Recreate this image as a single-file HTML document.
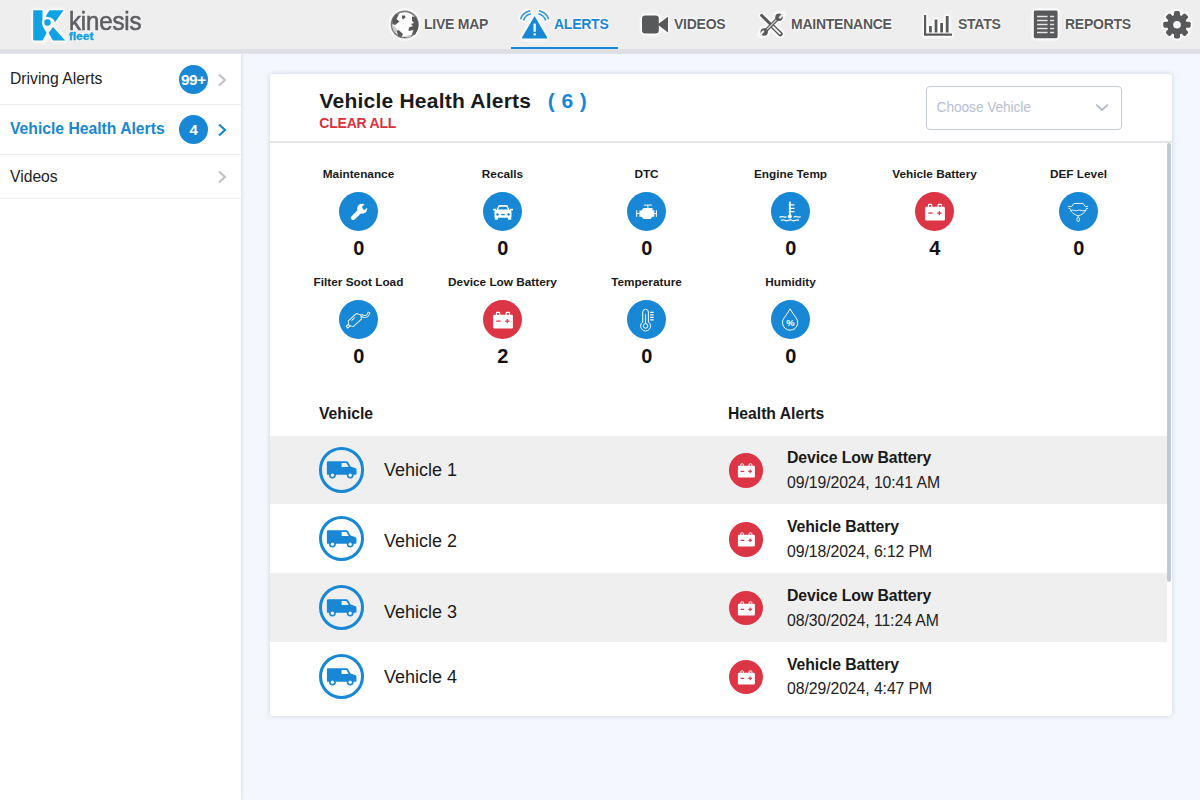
<!DOCTYPE html>
<html lang="en">
<head>
<meta charset="utf-8">
<title>Kinesis Fleet - Vehicle Health Alerts</title>
<style>
*{box-sizing:border-box;margin:0;padding:0}
html,body{width:1200px;height:800px;overflow:hidden}
body{font-family:"Liberation Sans",Arial,sans-serif;background:#f4f7fe;color:#1a1a1a;position:relative}
.abs{position:absolute}
/* header */
#hdr{position:absolute;left:0;top:0;width:1200px;height:49px;background:#eeeeee;z-index:5}
#strip{position:absolute;left:0;top:49px;width:1200px;height:5px;z-index:5;background:linear-gradient(#e4e5e8 0,#dcdde2 40%,#dddfe5 80%,#e6e8ee 100%)}
.nav{position:absolute;top:0;height:51px;font-weight:bold;font-size:14px;letter-spacing:-.25px;color:#58585a;line-height:16px;white-space:nowrap}
.nav span{position:absolute;top:16px}
.nav.act{color:#1787d6}
.nav span{text-shadow:0 0 1px #fff,0 0 1px #fff,0 0 2px #fff,0 0 2px #fff,0 0 2px #fff,0 0 3px #fff}
.hl{filter:drop-shadow(0 0 .7px #fff) drop-shadow(0 0 .8px #fff) drop-shadow(0 0 1px #fff) drop-shadow(0 0 1px #fff)}
#ul{position:absolute;left:511px;top:46.6px;width:106.5px;height:3.2px;background:#1787d6}
/* sidebar */
#side{position:absolute;left:0;top:54px;width:241px;height:746px;background:#fff;box-shadow:1px 0 3px rgba(150,160,190,.3);z-index:2}
.si{position:absolute;left:0;width:241px;border-bottom:1px solid #eeeef2;font-size:15.7px;color:#222}
.si .t{position:absolute;left:10px;white-space:nowrap;line-height:19px}
.bdg{position:absolute;left:178.8px;width:29.2px;height:29.2px;border-radius:50%;background:#1787d6;color:#fff;font-weight:bold;font-size:14px;text-align:center;line-height:29px;letter-spacing:-.6px}
/* card */
#card{position:absolute;left:270px;top:74px;width:902px;height:642px;background:#fff;border-radius:3px;box-shadow:0 0 5px rgba(105,110,130,.27)}
#chead{position:absolute;left:0;top:0;width:902px;height:69px;border-bottom:2px solid #e3e5ea}
#title{position:absolute;left:49.4px;top:14.8px;font-size:21px;letter-spacing:.23px;font-weight:bold;color:#1a1a1a;white-space:nowrap;line-height:24px}
#cnt{position:absolute;left:277.8px;top:14.8px;font-size:21px;letter-spacing:.4px;font-weight:bold;color:#1787d6;white-space:nowrap;line-height:24px}
#clr{position:absolute;left:49.3px;top:40.9px;font-size:14px;font-weight:bold;color:#d9323f;white-space:nowrap;line-height:16px;letter-spacing:-.22px}
#sel{position:absolute;left:656px;top:12.3px;width:196px;height:43.3px;border:1.8px solid #c8cddc;border-radius:4px;background:#fff}
#sel span{position:absolute;left:9.6px;top:11.8px;font-size:13.8px;letter-spacing:-.12px;color:#b6c0d2;line-height:17px;white-space:nowrap}
#sbar{position:absolute;left:896.9px;top:69px;width:4.4px;height:438.5px;background:#c3c8d9;border-radius:2px 2px 2px 2px}
.cat{position:absolute;width:144px;text-align:center}
.cat .l{position:absolute;left:-20px;width:184px;top:.2px;font-size:11.8px;font-weight:bold;color:#1a1a1a;line-height:14px;white-space:nowrap}
.cat .c{position:absolute;left:52.2px;top:24.9px;width:39.6px;height:39.6px;border-radius:50%;background:#1787d6}
.cat .c.r{background:#dc3545}
.cat .n{position:absolute;left:.4px;width:144px;top:68.6px;font-size:20px;font-weight:bold;line-height:24px;color:#111}
.cat svg{position:absolute;left:0;top:0;width:39.6px;height:39.6px}
.th{position:absolute;top:330.7px;font-size:15.7px;font-weight:bold;line-height:18px;color:#1a1a1a;white-space:nowrap}
.row{position:absolute;left:0;width:896.8px}
.row.g{background:#efefef}
.vc{position:absolute;left:49px;width:45.4px;height:45.4px;border-radius:50%;border:3px solid #1787d6}
.vc svg{position:absolute;left:-3px;top:-3px;width:45.4px;height:45.4px}
.vn{position:absolute;left:114px;font-size:18px;line-height:22px;color:#1a1a1a;white-space:nowrap}
.rc{position:absolute;left:458.6px;width:34.6px;height:34.6px;border-radius:50%;background:#dc3545}
.rc svg{position:absolute;left:0;top:0;width:34.6px;height:34.6px}
.at{position:absolute;left:517px;font-size:15.8px;letter-spacing:-.08px;font-weight:bold;line-height:19px;color:#1a1a1a;white-space:nowrap}
.ad{position:absolute;left:517px;font-size:15.8px;letter-spacing:-.08px;line-height:19px;color:#222;white-space:nowrap}
</style>
</head>
<body>
<svg width="0" height="0" style="position:absolute">
<defs>
<g id="wrench"><path d="M14.3 26.2 L21.6 18.9" stroke="#fff" stroke-width="4.6" stroke-linecap="round" fill="none"/><circle cx="23.4" cy="16.9" r="5.1" fill="#fff"/><path d="M23.3 14.9 L28.3 9.9 L31.3 12.9 L26.3 17.9 Q23.6 18.3 23.3 14.9Z" fill="#1787d6"/></g>
<g id="car"><path d="M13.2 19 L15.4 14.2 Q15.9 13.2 17 13.2 L23.4 13.2 Q24.5 13.2 25 14.2 L27.2 19Z" fill="#fff"/><path d="M15.3 17.6 L16.7 14.9 L23.7 14.9 L25.1 17.6Z" fill="#1787d6"/><rect x="10" y="17" width="3.4" height="1.7" rx=".6" fill="#fff"/><rect x="27" y="17" width="3.4" height="1.7" rx=".6" fill="#fff"/><rect x="11.6" y="18.3" width="17.2" height="7.6" rx="1.6" fill="#fff"/><rect x="11.9" y="24" width="3.3" height="4" rx=".6" fill="#fff"/><rect x="25.2" y="24" width="3.3" height="4" rx=".6" fill="#fff"/><circle cx="14.6" cy="22.7" r="1.25" fill="#1787d6"/><circle cx="25.8" cy="22.7" r="1.25" fill="#1787d6"/><rect x="18.2" y="22.3" width="4" height="1.1" rx=".5" fill="#1787d6"/></g>
<g id="engine"><path d="M12.6 18.8 L14.6 18.8 L16.6 16.2 L25.8 16.2 L25.8 18.4 L27.6 18.4 L27.6 25 L25.8 25 L23.8 27.2 L16.8 27.2 L14.6 25 L12.6 25Z" fill="#fff"/><path d="M17 13.2 H25.2 M21.1 13.2 V16.4 M9.8 18.4 V25.2 M9.8 21.8 H13 M29.7 18.4 V25.2 M27 21.8 H29.7" stroke="#fff" stroke-width="1" fill="none"/></g>
<g id="etemp"><rect x="18.1" y="9.7" width="1.9" height="14.5" rx=".9" fill="#fff"/><circle cx="19.05" cy="24.7" r="2" fill="#fff"/><path d="M19.5 13.1 H23.7 M19.5 16.5 H23.7 M19.5 19.9 H23.7" stroke="#fff" stroke-width="1.3" fill="none"/><path d="M9 25.4 Q10.6 24.4 12.2 25 T15.2 25.2 M23.2 25.2 Q24.8 24.4 26.4 25 T29.6 25.2 M10.4 28.6 Q12.2 27.6 14 28.6 T17.6 28.6 T21.2 28.6 T24.8 28.6 T27.8 28.4" stroke="#fff" stroke-width="1.25" fill="none" stroke-linecap="round"/></g>
<g id="cbat"><rect x="10.3" y="15" width="19.9" height="13.8" rx="1.2" fill="#fff"/><path d="M13.6 15.5 V13.4 Q13.6 12.5 14.5 12.5 H16.1 Q17 12.5 17 13.4 V15.5 M23.4 15.5 V13.4 Q23.4 12.5 24.3 12.5 H25.9 Q26.8 12.5 26.8 13.4 V15.5" stroke="#fff" stroke-width="1.1" fill="none"/><path d="M13.4 21.4 H17.8 M22.4 21.4 H26.8 M24.6 19.2 V23.6" stroke="#dc3545" stroke-width="1.2" fill="none"/></g>
<g id="def"><path d="M9 14.7 H12.8 L15 11.6 H24.4 L26.6 14.7 H29.4 M9.6 16.7 H11.2 Q11.6 19.6 14.2 21.6 Q17 23.6 19.4 24.1 Q21.8 23.6 24.6 21.6 Q27.2 19.6 27.6 16.7 H29.2 M12.2 18.8 Q13.8 17.8 15.6 18.6 T19 18.6 T22.4 18.6 T26.4 18.6 M19.4 24 V25.6" stroke="#fff" stroke-width=".9" fill="none"/><ellipse cx="19.4" cy="27.8" rx="1.4" ry="2.1" stroke="#fff" stroke-width=".9" fill="none"/></g>
<g id="soot"><path d="M22 14.9 Q23.4 16.6 25.4 16.6 H26.6 Q28.5 16.6 29.3 14.9 L30.5 12.3" stroke="#fff" stroke-width="2.9" fill="none"/><path d="M21.6 14.4 Q23.4 16.6 25.4 16.6 H26.6 Q28.5 16.6 29.3 14.9 L30.2 12.9" stroke="#1787d6" stroke-width="1.1" fill="none"/><g transform="rotate(-42 16 20.3)" stroke="#fff" stroke-width=".95" fill="#1787d6"><path d="M5.4 19.1 H8.2 V21.5 H5.4Z"/><path d="M8 20.3 L10.4 16.5 H21.6 L24 20.3 L21.6 24.1 H10.4Z"/><path d="M13.2 18.4 H17.6" fill="none"/></g></g>
<g id="therm"><path d="M15.9 22.2 V12.2 A2.85 2.85 0 0 1 21.6 12.2 V22.2 A5 5 0 1 1 15.9 22.2Z" stroke="#fff" stroke-width="1" fill="none"/><circle cx="18.75" cy="26.2" r="2.3" stroke="#fff" stroke-width="1" fill="none"/><path d="M18.75 24 V14.4" stroke="#fff" stroke-width="1" fill="none"/><path d="M23.4 12.6 H26.9 M23.4 15.1 H26.9 M23.4 17.6 H26.9 M23.4 20.1 H26.9" stroke="#fff" stroke-width="1.3" fill="none"/></g>
<g id="humid"><path d="M19.3 8.9 Q21.5 13 25.3 18 A7.7 7.7 0 1 1 13.3 18 Q17.1 13 19.3 8.9Z" stroke="#fff" stroke-width="1" fill="none"/><text x="19.5" y="26.6" font-family="Liberation Sans, Arial, sans-serif" font-size="9.4" font-weight="bold" fill="#fff" text-anchor="middle">%</text></g>
<g id="van"><path fill-rule="evenodd" fill="#1787d6" d="M9.2 14.4 H27.6 Q29 14.4 29.7 15.6 L32 19.8 L36.6 21.2 Q38 21.7 38 23.2 V27.2 Q38 28.2 37 28.2 H9.2 Q8 28.2 8 27 V15.6 Q8 14.4 9.2 14.4Z M22.9 16.2 V20.3 H30 L28.1 16.8 Q27.8 16.2 27 16.2Z"/><circle cx="13.6" cy="28.4" r="3.5" fill="#1787d6"/><circle cx="31.6" cy="28.4" r="3.5" fill="#1787d6"/><circle cx="13.6" cy="28.6" r="1.7" fill="#fff" fill-opacity=".92"/><circle cx="31.6" cy="28.6" r="1.7" fill="#fff" fill-opacity=".92"/></g>
<g id="bat"><rect x="9" y="13" width="17.2" height="11.9" rx="1.1" fill="#fff"/><path d="M11.9 13.4 V11.7 Q11.9 11 12.6 11 H13.9 Q14.6 11 14.6 11.7 V13.4 M20.4 13.4 V11.7 Q20.4 11 21.1 11 H22.4 Q23.1 11 23.1 11.7 V13.4" stroke="#fff" stroke-width="1" fill="none"/><path d="M11.8 18.6 H15.4 M19.6 18.6 H23.2 M21.4 16.8 V20.4" stroke="#dc3545" stroke-width="1.15" fill="none"/></g>
</defs></svg>
<div id="hdr">
  <svg class="abs hl" style="left:33px;top:10px" width="33" height="31" viewBox="0 0 33 31"><g fill="#fbf4ec"><circle cx="14.5" cy="12.5" r="5.3"/><path d="M9.8 15 H19.2 L16.4 22.6 L11.4 30.6 H9 L13 22.6Z"/></g><g fill="#10a3e3"><path d="M0.2 0.2 H9.5 V9.4 Q8.2 12.6 9.9 16.4 L13.5 23 L11.5 27 L9.5 30.4 H0.6 L0.2 30Z"/><path d="M16.5 0.2 H30.6 L22 12.3 Q20.2 8.2 17 7.6 L12.6 6.6Z"/><path d="M20 17 L32.2 30.4 H20 L16.4 24.6 L15.9 22.6Z"/><circle cx="14.5" cy="12.5" r="3.2"/></g></svg>
  <div class="abs" style="left:68.8px;top:5.7px;font-size:26.6px;line-height:30px;color:#5d5d62;-webkit-text-stroke:.6px #5d5d62;transform:scaleX(.905);transform-origin:0 0;white-space:nowrap;letter-spacing:-.2px;text-shadow:0 0 2px #fff">kinesis</div>
  <div class="abs" style="left:69.4px;top:31.2px;font-size:10px;line-height:12px;font-weight:bold;color:#169fe0;-webkit-text-stroke:.35px #169fe0;transform:scaleX(1.2);transform-origin:0 0;white-space:nowrap;text-shadow:0 0 2px #fff">fleet</div>
  <svg class="abs hl" style="left:389px;top:9px" width="31" height="31" viewBox="0 0 31 31"><circle cx="15.75" cy="15.5" r="13.2" fill="#fcfcfc" stroke="#7d7e81" stroke-width="1.7"/><path fill="#58595b" d="M3 11.5 L6.5 5.5 L10 5 L7.5 10 L10.5 12.5 L6 16 L3.5 15Z M13 6.5 L16 6.5 L16.5 8.5 L14 10.5 L13 9Z M23 7.5 L27 8 L29.3 15 L28.8 20 L26 26 L23 25 L24.5 21 L19.5 22 L20 18.5 L24 17 L22 15 L25 14 L23 11.5Z M7.5 22 L9.5 21 L14 25 L12.5 28 L9.5 27Z"/><path fill="#c9c9cb" d="M3 17 L6 17.5 L8 21 L7 23.5 L4.6 22Z M16.5 27.5 L21 26 L22.5 27.5 L18 28.8Z"/></svg>
  <div class="nav" style="left:424px"><span>LIVE MAP</span></div>
  <svg class="abs hl" style="left:518px;top:8px" width="34" height="32" viewBox="0 0 34 32"><path fill="#1787d6" d="M16.6 8 L29.2 29.6 Q29.6 30.6 28.6 30.6 H4.6 Q3.6 30.6 4 29.6Z"/><rect x="15.5" y="15.4" width="2.3" height="8.4" rx=".6" fill="#fff"/><rect x="15.5" y="25.2" width="2.3" height="2.4" rx=".6" fill="#fff"/><path d="M2.6 11.4 Q4.2 4.4 12.2 2.8 M5.6 12.6 Q6.8 7.4 12.8 5.8 M30.6 11.4 Q29 4.4 21 2.8 M27.6 12.6 Q26.4 7.4 20.4 5.8" stroke="#3b98dc" stroke-width="1.7" fill="none"/></svg>
  <div class="nav act" style="left:554px"><span>ALERTS</span></div>
  <svg class="abs hl" style="left:641px;top:14px" width="28" height="21" viewBox="0 0 28 21"><rect x="1" y="1.5" width="16.8" height="18" rx="3" fill="#58595b"/><path fill="#58595b" d="M16.5 10.5 L27 2.8 V18.4Z"/></svg>
  <div class="nav" style="left:674px"><span>VIDEOS</span></div>
  <svg class="abs hl" style="left:757.8px;top:10.6px" width="27" height="27" viewBox="0 0 27 27"><g fill="none" stroke-linecap="round"><path d="M3.6 4.4 L12.6 13.2" stroke="#58595b" stroke-width="3"/><path d="M14.6 15.4 L22.4 23" stroke="#58595b" stroke-width="4.6"/><path d="M15 15.8 L22 22.6" stroke="#f1f1f1" stroke-width="1.9"/><path d="M7 20.4 L20.4 7" stroke="#58595b" stroke-width="3.6"/><path d="M8.4 19 L19 8.4" stroke="#d4d4d6" stroke-width="1.3"/></g><circle cx="21" cy="6.2" r="3.7" fill="#58595b"/><path d="M20.6 6.6 L24.8 1.6 L26.4 3.2 L22.2 8Z" fill="#eee"/><circle cx="6.2" cy="21" r="3.7" fill="#58595b"/><path d="M6.6 20.6 L2.2 25.6 L0.6 24 L5 19Z" fill="#eee"/></svg>
  <div class="nav" style="left:791px"><span>MAINTENANCE</span></div>
  <svg class="abs hl" style="left:922px;top:13px" width="32" height="25" viewBox="0 0 32 25"><path fill="#58595b" d="M2 2 H4.2 V20.6 H30 V22.8 H2Z M7 13 H9.8 V19.6 H7Z M12.6 6.4 H15.4 V19.6 H12.6Z M18.2 10 H21 V19.6 H18.2Z M23.8 3 H26.6 V19.6 H23.8Z"/></svg>
  <div class="nav" style="left:958px"><span>STATS</span></div>
  <svg class="abs hl" style="left:1033px;top:10px" width="26" height="29" viewBox="0 0 26 29"><rect x=".8" y=".6" width="23.8" height="27.6" rx="1.4" fill="#58595b"/><path d="M4 6.4 H14.6 M17 6.4 H21.2 M4 10.4 H14.6 M17 10.4 H21.2 M4 14.4 H14.6 M17 14.4 H21.2 M4 18.4 H14.6 M17 18.4 H21.2 M4 22.4 H14.6 M17 22.4 H21.2" stroke="#e4e4e4" stroke-width="1.5" fill="none"/></svg>
  <div class="nav" style="left:1065px"><span>REPORTS</span></div>
  <svg class="abs hl" style="left:1162px;top:9px" width="30" height="31" viewBox="0 0 30 31"><g transform="translate(15 15.7)"><g fill="#58595b"><circle r="9.9"/><g id="tt"><rect x="-3" y="-13.7" width="6" height="6" rx="1.6"/><rect x="-3" y="7.7" width="6" height="6" rx="1.6"/></g><use href="#tt" transform="rotate(45)"/><use href="#tt" transform="rotate(90)"/><use href="#tt" transform="rotate(135)"/></g><circle r="3.8" fill="#fafafa"/></g></svg>
  <div id="ul"></div>
</div>
<div id="strip"></div>
<div id="side">
  <div class="si" style="top:0;height:51px"><div class="t" style="top:14.8px">Driving Alerts</div><div class="bdg" style="top:10.5px;font-size:15.4px;letter-spacing:-.45px">99+</div>
    <svg class="abs" style="left:216.9px;top:19px" width="10" height="14" viewBox="0 0 10 14"><path d="M2 1.5 L8 7 L2 12.5" fill="none" stroke="#bcbfcc" stroke-width="2"/></svg></div>
  <div class="si" style="top:51px;height:50px"><div class="t" style="top:14.2px;font-weight:bold;color:#1787d6;font-size:15.7px">Vehicle Health Alerts</div><div class="bdg" style="top:10px;font-size:15px">4</div>
    <svg class="abs" style="left:216.9px;top:18px" width="10" height="14" viewBox="0 0 10 14"><path d="M2 1.5 L8 7 L2 12.5" fill="none" stroke="#1787d6" stroke-width="2.2"/></svg></div>
  <div class="si" style="top:101px;height:44px"><div class="t" style="top:11.7px">Videos</div>
    <svg class="abs" style="left:216.9px;top:15.4px" width="10" height="14" viewBox="0 0 10 14"><path d="M2 1.5 L8 7 L2 12.5" fill="none" stroke="#bcbfcc" stroke-width="2"/></svg></div>
</div>
<div id="card">
  <div id="chead">
    <div id="title">Vehicle Health Alerts</div>
    <div id="cnt">( 6 )</div>
    <div id="clr">CLEAR ALL</div>
    <div id="sel"><span>Choose Vehicle</span>
      <svg class="abs" style="left:168px;top:15.5px" width="14" height="10" viewBox="0 0 14 10"><path d="M1.2 1.6 L7 6.9 L12.8 1.6" fill="none" stroke="#b3bacb" stroke-width="1.9"/></svg>
    </div>
  </div>
  <div id="sbar"></div>
  <div class="cat" style="left:16.5px;top:93px"><div class="l">Maintenance</div><div class="c"><svg viewBox="0 0 40 40"><use href="#wrench"/></svg></div><div class="n">0</div></div>
  <div class="cat" style="left:160.5px;top:93px"><div class="l">Recalls</div><div class="c"><svg viewBox="0 0 40 40"><use href="#car"/></svg></div><div class="n">0</div></div>
  <div class="cat" style="left:304.5px;top:93px"><div class="l">DTC</div><div class="c"><svg viewBox="0 0 40 40"><use href="#engine"/></svg></div><div class="n">0</div></div>
  <div class="cat" style="left:448.5px;top:93px"><div class="l">Engine Temp</div><div class="c"><svg viewBox="0 0 40 40"><use href="#etemp"/></svg></div><div class="n">0</div></div>
  <div class="cat" style="left:592.5px;top:93px"><div class="l">Vehicle Battery</div><div class="c r"><svg viewBox="0 0 40 40"><use href="#cbat"/></svg></div><div class="n">4</div></div>
  <div class="cat" style="left:736.5px;top:93px"><div class="l">DEF Level</div><div class="c"><svg viewBox="0 0 40 40"><use href="#def"/></svg></div><div class="n">0</div></div>
  <div class="cat" style="left:16.5px;top:201px"><div class="l">Filter Soot Load</div><div class="c"><svg viewBox="0 0 40 40"><use href="#soot"/></svg></div><div class="n">0</div></div>
  <div class="cat" style="left:160.5px;top:201px"><div class="l">Device Low Battery</div><div class="c r"><svg viewBox="0 0 40 40"><use href="#cbat"/></svg></div><div class="n">2</div></div>
  <div class="cat" style="left:304.5px;top:201px"><div class="l">Temperature</div><div class="c"><svg viewBox="0 0 40 40"><use href="#therm"/></svg></div><div class="n">0</div></div>
  <div class="cat" style="left:448.5px;top:201px"><div class="l">Humidity</div><div class="c"><svg viewBox="0 0 40 40"><use href="#humid"/></svg></div><div class="n">0</div></div>
  <div class="th" style="left:49px">Vehicle</div>
  <div class="th" style="left:458px">Health Alerts</div>
  <div class="row g" style="top:362.0px;height:68.4px"></div>
  <div class="row g" style="top:499.4px;height:68.4px"></div>
  <div class="vc" style="top:373.2px"><svg viewBox="0 0 46 46"><use href="#van"/></svg></div><div class="vn" style="top:384.8px">Vehicle 1</div>
  <div class="rc" style="top:379.0px"><svg viewBox="0 0 35 35"><use href="#bat"/></svg></div><div class="at" style="top:374.3px">Device Low Battery</div><div class="ad" style="top:398.9px">09/19/2024, 10:41 AM</div>
  <div class="vc" style="top:442.0px"><svg viewBox="0 0 46 46"><use href="#van"/></svg></div><div class="vn" style="top:455.5px">Vehicle 2</div>
  <div class="rc" style="top:448.2px"><svg viewBox="0 0 35 35"><use href="#bat"/></svg></div><div class="at" style="top:443.2px">Vehicle Battery</div><div class="ad" style="top:467.9px">09/18/2024, 6:12 PM</div>
  <div class="vc" style="top:510.8px"><svg viewBox="0 0 46 46"><use href="#van"/></svg></div><div class="vn" style="top:526.7px">Vehicle 3</div>
  <div class="rc" style="top:516.9px"><svg viewBox="0 0 35 35"><use href="#bat"/></svg></div><div class="at" style="top:511.9px">Device Low Battery</div><div class="ad" style="top:536.6px">08/30/2024, 11:24 AM</div>
  <div class="vc" style="top:579.5px"><svg viewBox="0 0 46 46"><use href="#van"/></svg></div><div class="vn" style="top:592.4px">Vehicle 4</div>
  <div class="rc" style="top:585.6px"><svg viewBox="0 0 35 35"><use href="#bat"/></svg></div><div class="at" style="top:580.6px">Vehicle Battery</div><div class="ad" style="top:605.4px">08/29/2024, 4:47 PM</div>
</div>
</body>
</html>
